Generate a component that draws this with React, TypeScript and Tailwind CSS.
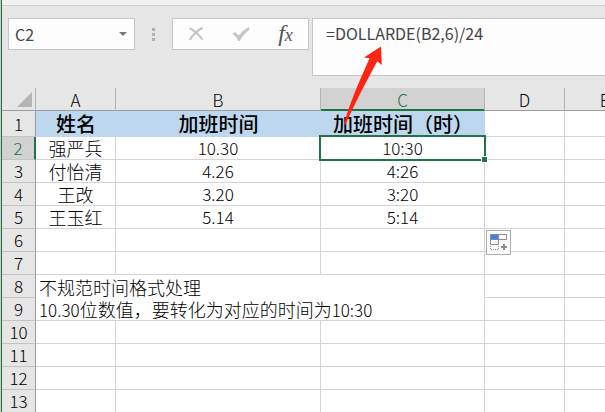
import type { ReactNode } from 'react';

const columns = ['A', 'B', 'C', 'D', 'E'];

const people = [
    { row: 2, name: '强严兵', value: '10.30', time: '10:30' },
    { row: 3, name: '付怡清', value: '4.26', time: '4:26' },
    { row: 4, name: '王改', value: '3.20', time: '3:20' },
    { row: 5, name: '王玉红', value: '5.14', time: '5:14' },
];

function CancelIcon() {
    return (
        <svg width="16" height="16" viewBox="0 0 16 16" fill="none" stroke="#c3c3c3">
            <path d="M1.5 2.2C5 4 10.500 8.500 14.500 13.500" strokeWidth="2" />
            <path d="M14.500 1.800C9.500 4.500 4.500 9.500 1.800 13.800" strokeWidth="2.200" />
        </svg>
    );
}

function EnterIcon() {
    return (
        <svg width="18" height="16" viewBox="0 0 18 16" fill="#c6c6c6">
            <path d="M.6 8 3 6 6.800 9.600C9.500 6 12.500 3.200 16.800.8L17.400 3.800C13.500 6.800 10.400 10.400 7.600 15H6.400C5 12.200 3.200 10 .6 8Z" />
        </svg>
    );
}

function FillOptionsIcon() {
    return (
        <svg width="17" height="17" viewBox="0 0 17 17" fill="none" stroke="#8c8c8c">
            <path d="M.5.5H16.500V5.500H.5Z" fill="#fff" />
            <path d="M.5.5H8.500V5.500H.5Z" fill="#3c82f6" />
            <path d="M.5 5.500H8.500V10.500H.5Z" fill="#fff" />
            <path d="M.5 12V15.500H8.500V12" strokeDasharray="1 1" />
            <path d="M14 10V16M11 13H17" strokeWidth="2" />
        </svg>
    );
}

function RedArrow() {
    return (
        <svg className="pointer-events-none absolute left-[340px] top-[44px] z-20" width="46" height="84" viewBox="0 0 46 84">
            <path d="M41 2.500 24 13.500 29.500 14.200C22 32 12 52 4 79.500L5.500 81C14 61 26 38 37.300 17.300L41.800 21Z" fill="#ff2412" />
        </svg>
    );
}

function FormulaBar() {
    return (
        <div className="flex items-start pb-3 pl-1.5 pt-3">
            <div className="flex h-8 w-[127px] shrink-0 items-center border border-[#c6c6c6] bg-[#fdfdfd] pl-1.5 pr-[3px]">
                <input
                    aria-label="Name box"
                    defaultValue="C2"
                    className="min-w-0 flex-1 bg-transparent text-base text-[#444] outline-none"
                />
                <button aria-label="Show names" className="flex size-4 items-center justify-center">
                    <svg width="8" height="4" viewBox="0 0 8 4">
                        <path d="M0 0H8L4 4Z" fill="#777" />
                    </svg>
                </button>
            </div>

            <div className="flex h-8 w-[37px] shrink-0 flex-col items-center justify-center gap-0.5">
                <span className="size-[3px] bg-[#b1b1b1]" />
                <span className="size-[3px] bg-[#b1b1b1]" />
                <span className="size-[3px] bg-[#b1b1b1]" />
            </div>

            <div className="flex h-8 w-[137px] shrink-0 border border-[#c6c6c6] bg-[#fdfdfd]">
                <button aria-label="Cancel" className="flex flex-1 items-center justify-center">
                    <CancelIcon />
                </button>
                <button aria-label="Enter" className="flex flex-1 items-center justify-center">
                    <EnterIcon />
                </button>
                <button
                    aria-label="Insert function"
                    className="flex flex-1 items-baseline justify-center font-['Liberation_Serif',serif] text-2xl/[28px] italic text-[#555]"
                >
                    f<span className="text-lg/[20px]">x</span>
                </button>
            </div>

            <textarea
                aria-label="Formula"
                defaultValue="=DOLLARDE(B2,6)/24"
                className="ml-[3px] h-[58px] min-w-0 flex-1 resize-none border border-r-0 border-[#c6c6c6] bg-[#fdfdfd] px-[13px] py-0.5 text-base text-[#444] outline-none"
            />
        </div>
    );
}

function RowHeader({ row, active = false }: { row: number; active?: boolean }) {
    return (
        <th
            scope="row"
            className={
                active
                    ? 'border-b border-r-2 border-b-[#c4c4c4] border-r-[#217346] bg-[#d2d2d2] p-0 font-light text-[#217346]'
                    : 'border-b border-r border-b-[#c4c4c4] border-r-[#9b9b9b] bg-[#e6e6e6] p-0 font-light text-black'
            }
        >
            {row}
        </th>
    );
}

function Cell({ children }: { children?: ReactNode }) {
    return <td className="relative border-b border-r border-[#d4d4d4] p-0 text-center">{children}</td>;
}

function TitleCell({ children }: { children: ReactNode }) {
    return <td className="bg-[#bdd7ee] p-0 text-center text-xl/[24px] font-medium">{children}</td>;
}

function EmptyRow({ row }: { row: number }) {
    return (
        <tr className="h-[23px]">
            <RowHeader row={row} />
            {columns.map((column) => (
                <Cell key={column}>
                    {row === 6 && column === 'D' && (
                        <button
                            aria-label="Auto fill options"
                            className="absolute left-px top-px z-10 flex size-[25px] items-center justify-center border border-[#acacac] bg-[#fdfdfd]"
                        >
                            <FillOptionsIcon />
                        </button>
                    )}
                </Cell>
            ))}
        </tr>
    );
}

function Sheet() {
    return (
        <table className="w-[643px] table-fixed border-separate border-spacing-0 bg-white text-[17px]/[20px] font-light text-black">
            <colgroup>
                <col className="w-[34px]" />
                <col className="w-[80px]" />
                <col className="w-[205px]" />
                <col className="w-[164px]" />
                <col className="w-[80px]" />
                <col className="w-[80px]" />
            </colgroup>
            <thead>
                <tr className="h-[23px] bg-[#e6e6e6]">
                    <td className="border-b border-r border-b-[#9b9b9b] border-r-[#b4b4b4] p-0">
                        <svg className="ml-auto mr-[3px]" width="15" height="15" viewBox="0 0 15 15">
                            <path d="M15 0V15H0Z" fill="#b4b4b4" />
                        </svg>
                    </td>
                    {columns.map((column) => (
                        <th
                            key={column}
                            scope="col"
                            className={
                                column === 'C'
                                    ? 'border-b border-r border-b-[#217346] border-r-[#b4b4b4] bg-[#d2d2d2] p-0 align-bottom font-light text-[#217346] shadow-[inset_0_-1px_0_#217346]'
                                    : 'border-b border-r border-b-[#9b9b9b] border-r-[#b4b4b4] p-0 align-bottom font-light text-black'
                            }
                        >
                            {column}
                        </th>
                    ))}
                </tr>
            </thead>
            <tbody>
                <tr className="h-[26px]">
                    <RowHeader row={1} />
                    <TitleCell>姓名</TitleCell>
                    <TitleCell>加班时间</TitleCell>
                    <TitleCell>加班时间（时）</TitleCell>
                    <Cell />
                    <Cell />
                </tr>
                {people.map((person) => (
                    <tr key={person.row} className="h-[23px]">
                        <RowHeader row={person.row} active={person.row === 2} />
                        <Cell>
                            <p className="text-lg/[20px]">{person.name}</p>
                        </Cell>
                        <Cell>{person.value}</Cell>
                        <Cell>
                            {person.time}
                            {person.row === 2 && (
                                <div className="absolute -inset-0.5 z-10 border-2 border-[#217346]">
                                    <span className="absolute -bottom-1 -right-1 size-[7px] border border-white bg-[#217346]" />
                                </div>
                            )}
                        </Cell>
                        <Cell />
                        <Cell />
                    </tr>
                ))}
                <EmptyRow row={6} />
                <EmptyRow row={7} />
                {/* Note merged over A8:C9 */}
                <tr className="h-[23px]">
                    <RowHeader row={8} />
                    <td colSpan={3} rowSpan={2} className="border-b border-r border-[#d4d4d4] p-0 pl-[3px] text-lg/[22px]">
                        <p>不规范时间格式处理</p>
                        <p>
                            <span className="text-[17px]/[20px]">10.30</span>位数值，要转化为对应的时间为
                            <span className="text-[17px]/[20px]">10:30</span>
                        </p>
                    </td>
                    <Cell />
                    <Cell />
                </tr>
                <tr className="h-[23px]">
                    <RowHeader row={9} />
                    <Cell />
                    <Cell />
                </tr>
                {[10, 11, 12, 13].map((row) => (
                    <EmptyRow key={row} row={row} />
                ))}
            </tbody>
        </table>
    );
}

export default function App() {
    return (
        <div className="relative flex h-screen overflow-hidden bg-[#e6e6e6] font-['Noto_Sans_CJK_SC',sans-serif]">
            <div className="w-0.5 shrink-0 border-r border-[#217346] bg-[#c9c9c9]" />
            <main className="min-w-0 flex-1">
                <div className="h-1.5 border-b border-[#d0d0d0] bg-[#f3f2f0]" />
                <FormulaBar />
                <Sheet />
            </main>
            <RedArrow />
        </div>
    );
}
